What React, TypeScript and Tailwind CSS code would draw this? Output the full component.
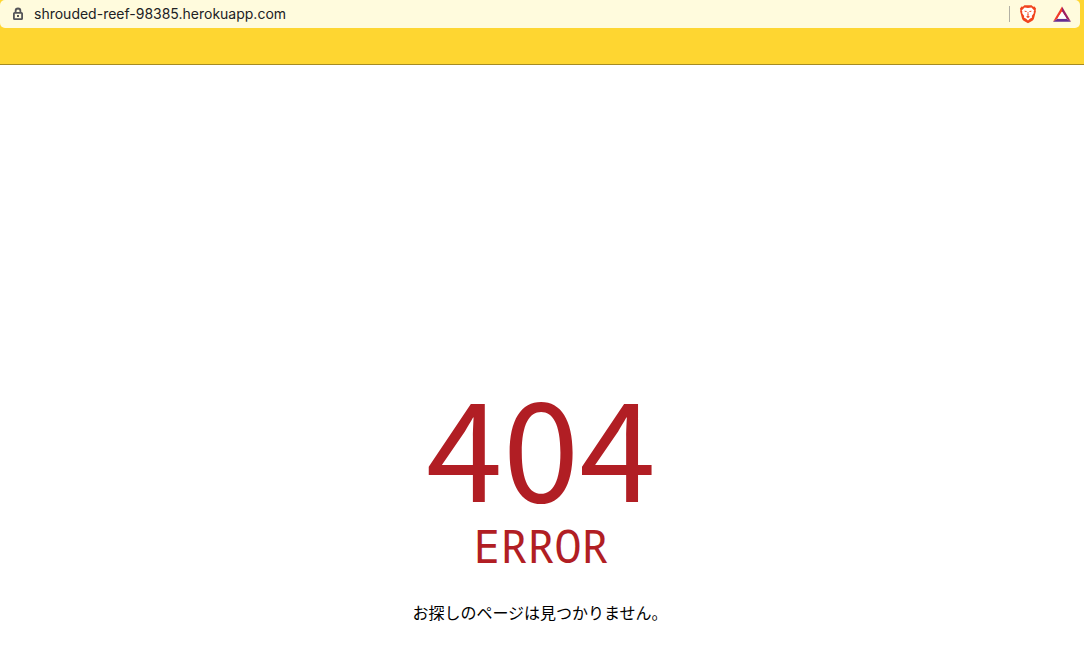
function LockIcon() {
  return (
    <svg className="h-4 w-4 shrink-0" viewBox="0 0 16 16" fill="none" aria-hidden="true">
      <path d="M5.6 7V4.9a2.4 2.4 0 0 1 4.8 0V7" stroke="#555558" strokeWidth="1.8" />
      <rect x="3.9" y="6.9" width="8.2" height="6.3" rx="0.7" stroke="#555558" strokeWidth="1.8" />
      <rect x="7" y="9" width="2" height="2" fill="#555558" />
    </svg>
  );
}

function ShieldIcon() {
  return (
    <svg className="h-5 w-5" viewBox="0 0 20 20" aria-hidden="true">
      <path
        d="M6.4 1.2h7.2l1.6 1.6 1.4-.2 1.5 2.1-.5 1.4.3 1.2-1.9 7.1c-.3 1-.8 1.7-1.6 2.3L10 19.2l-4.4-2.5c-.8-.6-1.3-1.3-1.6-2.3L2.1 7.3l.3-1.2-.5-1.4 1.5-2.1 1.4.2z"
        fill="#f1441e"
      />
      <path
        d="M6.6 3.6l3.4.5 3.4-.5 2.9 3-.7 1.2.3 1.2-2.1 3 .3 1.5-2.3 1.2-1.8 1.9-1.8-1.9-2.3-1.2.3-1.5-2.1-3 .3-1.2-.7-1.2z"
        fill="#fff"
      />
      <path
        d="M6.3 6.7l2.3.4v1l-1.7-.3zM13.7 6.7l-2.3.4v1l1.7-.3zM9.6 8h.8v2.4l.8.5-1.2.8-1.2-.8.8-.5zM8 12.7l2-.9 2 .9-2 1.2z"
        fill="#f1441e"
      />
    </svg>
  );
}

function TriangleIcon() {
  return (
    <svg className="h-4 w-[18px]" viewBox="0 0 18 16" aria-hidden="true">
      <path d="M9 .4v5.1L4.4 12.7 0 15.7z" fill="#f23c2b" />
      <path d="M9 .4l9 15.3-4.4-3L9 5.5z" fill="#9e1f63" />
      <path d="M0 15.7l4.4-3h9.2l4.4 3z" fill="#662d91" />
      <path d="M9 5.5l4.6 7.2H4.4z" fill="#fff" />
    </svg>
  );
}

export default function App() {
  return (
    <div className="flex min-h-screen flex-col bg-white font-['Inter','Liberation_Sans',sans-serif]">
      <header className="h-[65px] border-b border-[#a68b22] bg-[#fed631] pr-1">
        <div className="flex h-7 items-center rounded-[5px] bg-[#fffbdd] pr-2 pl-2.5">
          <LockIcon />
          <input
            type="text"
            aria-label="Address"
            defaultValue="shrouded-reef-98385.herokuapp.com"
            className="ml-2 h-7 min-w-0 flex-1 bg-transparent pb-0.5 text-sm text-[#202124] outline-none"
          />
          <span className="h-4 w-px bg-[#b2b0a4]" />
          <button type="button" aria-label="Shields" className="ml-2">
            <ShieldIcon />
          </button>
          <button type="button" aria-label="Rewards" className="mr-px ml-[15px]">
            <TriangleIcon />
          </button>
        </div>
      </header>
      <main className="flex flex-1 flex-col items-center justify-end pb-10 text-center">
        <h1 className="pr-0.5 text-[#b11e24]">
          <span className="mb-2.5 block font-['Noto_Sans_CJK_JP',sans-serif] text-[138px] leading-[136px]">404</span>
          <span className="block font-['Noto_Sans_Mono','DejaVu_Sans_Mono',monospace] text-[45px] leading-[52px]">
            ERROR
          </span>
        </h1>
        <p className="mt-7 pr-1 font-['Noto_Sans_CJK_JP',sans-serif] text-base text-black">
          お探しのページは見つかりません。
        </p>
      </main>
    </div>
  );
}
